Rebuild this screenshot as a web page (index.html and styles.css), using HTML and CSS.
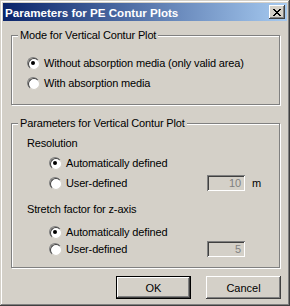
FILE: index.html
```html
<!DOCTYPE html>
<html>
<head>
<meta charset="utf-8">
<link rel="stylesheet" href="styles.css">
</head>
<body>
<div class="window">
  <div class="titlebar">
    <span class="title">Parameters for PE Contur Plots</span>
    <button class="close"><svg width="8" height="7" viewBox="0 0 8 7"><path d="M0 0h2v1H0zM6 0h2v1H6zM1 1h2v1H1zM5 1h2v1H5zM2 2h4v1H2zM3 3h2v1H3zM2 4h4v1H2zM1 5h2v1H1zM5 5h2v1H5zM0 6h2v1H0zM6 6h2v1H6z" fill="#000"/></svg></button>
  </div>
  <div class="body">
    <fieldset class="group">
      <legend>Mode for Vertical Contur Plot</legend>
      <div class="content g1">
        <div class="row"><span class="radio checked"></span><span>Without absorption media (only valid area)</span></div>
        <div class="row r2"><span class="radio"></span><span>With absorption media</span></div>
      </div>
    </fieldset>
    <fieldset class="group g2box">
      <legend>Parameters for Vertical Contur Plot</legend>
      <div class="content g2">
        <div class="row">Resolution</div>
        <div class="row opt a1"><span class="radio checked"></span><span>Automatically defined</span></div>
        <div class="row opt u1"><span class="radio"></span><span class="optlabel">User-defined</span><span class="field">10</span><span class="unit">m</span></div>
        <div class="row s1">Stretch factor for z-axis</div>
        <div class="row opt a2"><span class="radio checked"></span><span>Automatically defined</span></div>
        <div class="row opt u2"><span class="radio"></span><span class="optlabel">User-defined</span><span class="field">5</span></div>
      </div>
    </fieldset>
    <div class="buttons">
      <button class="btn default">OK</button>
      <button class="btn">Cancel</button>
    </div>
  </div>
</div>
</body>
</html>
```
FILE: styles.css
```css
* { box-sizing: border-box; }
html, body { margin: 0; padding: 0; }
body {
  font-family: "Liberation Sans", Arial, sans-serif;
  font-size: 11px;
  letter-spacing: -0.15px;
  color: #000;
  background: #d4d0c8;
}
.window {
  width: 290px;
  height: 306px;
  padding: 3px;
  background: #d4d0c8;
  box-shadow: inset -1px -1px #404040, inset 1px 1px #d4d0c8, inset -2px -2px #808080, inset 2px 2px #fff;
  display: flex;
  flex-direction: column;
}
.titlebar {
  height: 18px;
  flex: none;
  background: linear-gradient(to right, #0a246a, #a6caf0);
  display: flex;
  align-items: center;
  justify-content: space-between;
  padding: 0 2px;
}
.title {
  color: #fff;
  font-weight: bold;
  font-size: 11.6px;
  letter-spacing: 0;
}
.close {
  width: 16px;
  height: 14px;
  padding: 0;
  border: 0;
  background: #d4d0c8;
  box-shadow: inset -1px -1px #404040, inset 1px 1px #fff, inset -2px -2px #808080;
  display: flex;
  align-items: center;
  justify-content: center;
}
.close svg { display: block; }
.body {
  padding: 8px 7px 0 8px;
  display: flex;
  flex-direction: column;
}
.group {
  margin: 0;
  padding: 0;
  min-width: 0;
  border: 1px solid #808080;
  box-shadow: inset 1px 1px #fff, 1px 1px #fff;
}
.group legend {
  margin-left: 6px;
  padding: 0 2px;
  height: 13px;
  line-height: 13px;
  background: #d4d0c8;
}
.g2box { margin-top: 12px; }
.content { padding-left: 15px; display: flex; flex-direction: column; }
.g1 { padding-top: 13px; padding-bottom: 13px; }
.g2 { padding-top: 5px; padding-bottom: 10px; }
.row {
  display: flex;
  align-items: center;
  height: 16px;
  white-space: nowrap;
}
.r2 { margin-top: 4px; }
.opt { padding-left: 22px; }
.a1 { margin-top: 4px; }
.u1 { margin-top: 4px; }
.s1 { margin-top: 10px; }
.a2 { margin-top: 7px; }
.u2 { margin-top: 1px; }
.radio {
  position: relative;
  flex: none;
  width: 12px;
  height: 12px;
  margin-right: 5px;
  border-radius: 50%;
  border: 1px solid;
  border-color: #808080 #fff #fff #808080;
}
.radio::before {
  content: "";
  display: block;
  width: 10px;
  height: 10px;
  border-radius: 50%;
  border: 1px solid;
  border-color: #404040 #d4d0c8 #d4d0c8 #404040;
  background: #fff;
}
.radio.checked::after {
  content: "";
  position: absolute;
  left: 3px;
  top: 3px;
  width: 4px;
  height: 4px;
  border-radius: 50%;
  background: #000;
}
.optlabel { width: 141px; }
.field {
  width: 38px;
  height: 16px;
  line-height: 16px;
  text-align: right;
  padding-right: 4px;
  color: #808080;
  background: #d4d0c8;
  box-shadow: inset 1px 1px #808080, inset -1px -1px #fff, inset 2px 2px #404040, inset -2px -2px #d4d0c8;
}
.unit { margin-left: 7px; }
.buttons {
  display: flex;
  justify-content: flex-end;
  gap: 15px;
  margin-top: 8px;
  margin-right: -1px;
}
.btn {
  width: 75px;
  height: 23px;
  padding: 0;
  border: 0;
  font: inherit;
  color: #000;
  background: #d4d0c8;
  box-shadow: inset -1px -1px #404040, inset 1px 1px #fff, inset -2px -2px #808080, inset 2px 2px #d4d0c8;
}
.btn.default {
  box-shadow: inset 0 0 0 1px #000, inset -2px -2px #404040, inset 2px 2px #fff, inset -3px -3px #808080;
}
```
